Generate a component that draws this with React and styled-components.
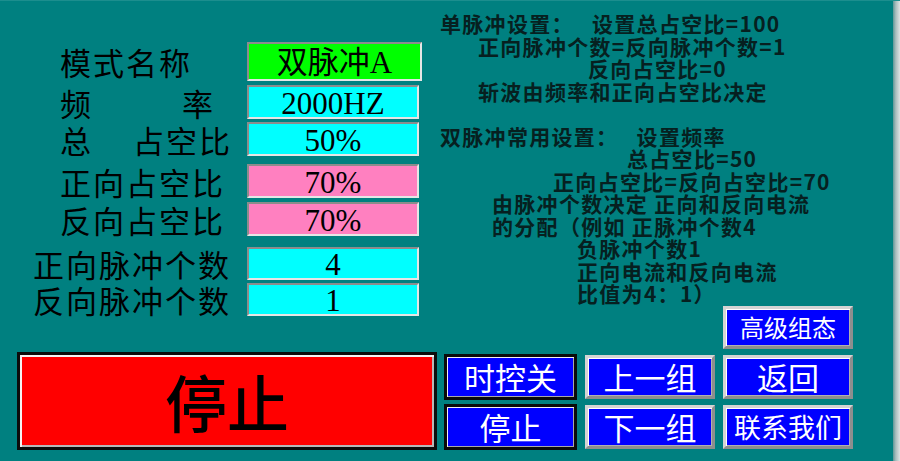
import React from 'react';
import styled, { createGlobalStyle, css } from 'styled-components';

const Global = createGlobalStyle`
  html, body {
    margin: 0;
    padding: 0;
    background: #008080;
  }
  * {
    box-sizing: border-box;
  }
`;

const CJK = `"Noto Sans CJK SC", "Noto Sans", sans-serif`;
const SERIF = `"Liberation Serif", "Noto Sans CJK SC", serif`;

const Page = styled.div`
  display: flex;
  width: 900px;
  height: 461px;
  overflow: hidden;
  background: #008080;
  border-top: 1px solid #1c8e8e;
`;

const Screen = styled.div`
  flex: 1;
  display: flex;
`;

const Edge = styled.div`
  width: 7px;
  background: linear-gradient(to right, #5f9696, #a9bdbd 40%, #dfe4e4);
`;

const LeftColumn = styled.div`
  width: 440px;
  display: flex;
  flex-direction: column;
  justify-content: space-between;
  padding: 40px 0 11px;
`;

const RightColumn = styled.div`
  flex: 1;
  display: flex;
  flex-direction: column;
  justify-content: space-between;
  padding: 11px 0 12px;
`;

const Form = styled.div`
  display: flex;
  flex-direction: column;
`;

const Row = styled.div`
  display: flex;
  align-items: center;
  height: ${(p) => p.$h}px;
  margin-top: ${(p) => p.$mt || 0}px;
`;

const Label = styled.div`
  width: 247px;
  display: flex;
  padding-left: ${(p) => p.$indent}px;
  font-family: ${CJK};
  font-size: 31px;
  letter-spacing: 2px;
  line-height: 1;
  color: #000;
  white-space: nowrap;
`;

const Spacer = styled.span`
  display: inline-block;
  width: ${(p) => p.$w}px;
`;

const fills = {
  green: '#00ff00',
  cyan: '#00ffff',
  pink: '#ff80c0',
};

const ValueBox = styled.div`
  width: ${(p) => p.$w || 172}px;
  height: 100%;
  display: flex;
  align-items: center;
  justify-content: center;
  background: ${(p) => fills[p.$fill]};
  border: 2px solid;
  border-color: #8c8c8c #e6e6e6 #e6e6e6 #8c8c8c;
  font-family: ${SERIF};
  font-size: 31px;
  line-height: 1;
  color: #000;
  padding-top: 2px;
`;

const BigButton = styled.button`
  margin-left: 17px;
  width: 420px;
  height: 98px;
  background: #ff0000;
  border: 3px solid #0c0c0c;
  box-shadow: inset 2px 2px 0 #f4f4f4, inset -2px -2px 0 #b8b8b8;
  font-family: ${CJK};
  font-size: 62px;
  font-weight: 500;
  line-height: 1;
  color: #000;
  padding: 0;
  cursor: pointer;
`;

const Notes = styled.div`
  font-family: ${CJK};
  font-size: 21px;
  font-weight: 700;
  letter-spacing: 1.3px;
  line-height: 22.5px;
  color: #062020;
`;

const Line = styled.div`
  padding-left: ${(p) => p.$indent || 0}px;
  height: 22.5px;
  white-space: pre;
`;

const ButtonGrid = styled.div`
  display: grid;
  grid-template-columns: 133px 130px 130px;
  grid-template-rows: 45px 46px 46px;
  column-gap: 8px;
  row-gap: 4px;
  padding-left: 4px;
`;

const PanelButton = styled.button`
  grid-column: ${(p) => p.$col || 'auto'};
  display: flex;
  align-items: center;
  justify-content: center;
  background: #0000ff;
  color: #fff;
  font-family: ${CJK};
  font-size: ${(p) => p.$size || 31}px;
  line-height: 1;
  padding: 0;
  cursor: pointer;
  ${(p) =>
    p.$active
      ? css`
          border: 3px solid #0a0a0a;
          box-shadow: inset 1px 1px 0 #f0f0f0, inset -1px -1px 0 #a8a8a8;
        `
      : css`
          margin: 1px 0;
          border: 3px solid;
          border-color: #d4d4d4 #8e8e8e #8e8e8e #d4d4d4;
          box-shadow: inset 1px 1px 0 #ffffff, inset -1px -1px 0 #b0b0b0;
        `}
`;

const rows = [
  { label: ['模式名称'], indent: 60, value: '双脉冲A', fill: 'green', h: 39, mt: 1, w: 175 },
  { label: ['频', '率'], gap: 89, indent: 60, value: '2000HZ', fill: 'cyan', h: 34, mt: 4 },
  { label: ['总', '占空比'], gap: 40, indent: 60, value: '50%', fill: 'cyan', h: 34, mt: 3 },
  { label: ['正向占空比'], indent: 60, value: '70%', fill: 'pink', h: 34, mt: 8 },
  { label: ['反向占空比'], indent: 60, value: '70%', fill: 'pink', h: 34, mt: 4 },
  { label: ['正向脉冲个数'], indent: 33, value: '4', fill: 'cyan', h: 33, mt: 11 },
  { label: ['反向脉冲个数'], indent: 33, value: '1', fill: 'cyan', h: 33, mt: 3 },
];

const notes = [
  { text: '单脉冲设置：   设置总占空比=100', indent: 0 },
  { text: '正向脉冲个数=反向脉冲个数=1', indent: 38 },
  { text: '反向占空比=0', indent: 148 },
  { text: '斩波由频率和正向占空比决定', indent: 38 },
  { text: '', indent: 0 },
  { text: '双脉冲常用设置：   设置频率', indent: 0 },
  { text: '总占空比=50', indent: 187 },
  { text: '正向占空比=反向占空比=70', indent: 113 },
  { text: '由脉冲个数决定 正向和反向电流', indent: 52 },
  { text: '的分配（例如 正脉冲个数4', indent: 52 },
  { text: '负脉冲个数1', indent: 137 },
  { text: '正向电流和反向电流', indent: 137 },
  { text: '比值为4：1）', indent: 137 },
];

const buttons = [
  { text: '高级组态', col: 3, size: 24 },
  { text: '时控关', active: true },
  { text: '上一组' },
  { text: '返回' },
  { text: '停止', active: true },
  { text: '下一组' },
  { text: '联系我们', size: 27 },
];

const App = () => (
  <>
    <Global />
    <Page>
      <Screen>
        <LeftColumn>
          <Form>
            {rows.map((row) => (
              <Row key={row.value + row.label[0]} $h={row.h} $mt={row.mt}>
                <Label $indent={row.indent}>
                  <span>{row.label[0]}</span>
                  {row.label[1] && (
                    <>
                      <Spacer $w={row.gap} />
                      <span>{row.label[1]}</span>
                    </>
                  )}
                </Label>
                <ValueBox $fill={row.fill} $w={row.w}>{row.value}</ValueBox>
              </Row>
            ))}
          </Form>
          <BigButton type="button">停止</BigButton>
        </LeftColumn>
        <RightColumn>
          <Notes>
            {notes.map((line, i) => (
              <Line key={i} $indent={line.indent}>{line.text}</Line>
            ))}
          </Notes>
          <ButtonGrid>
            {buttons.map((b) => (
              <PanelButton
                key={b.text + (b.active ? '-a' : '')}
                type="button"
                $col={b.col}
                $size={b.size}
                $active={b.active}
              >
                {b.text}
              </PanelButton>
            ))}
          </ButtonGrid>
        </RightColumn>
      </Screen>
      <Edge />
    </Page>
  </>
);

export default App;
